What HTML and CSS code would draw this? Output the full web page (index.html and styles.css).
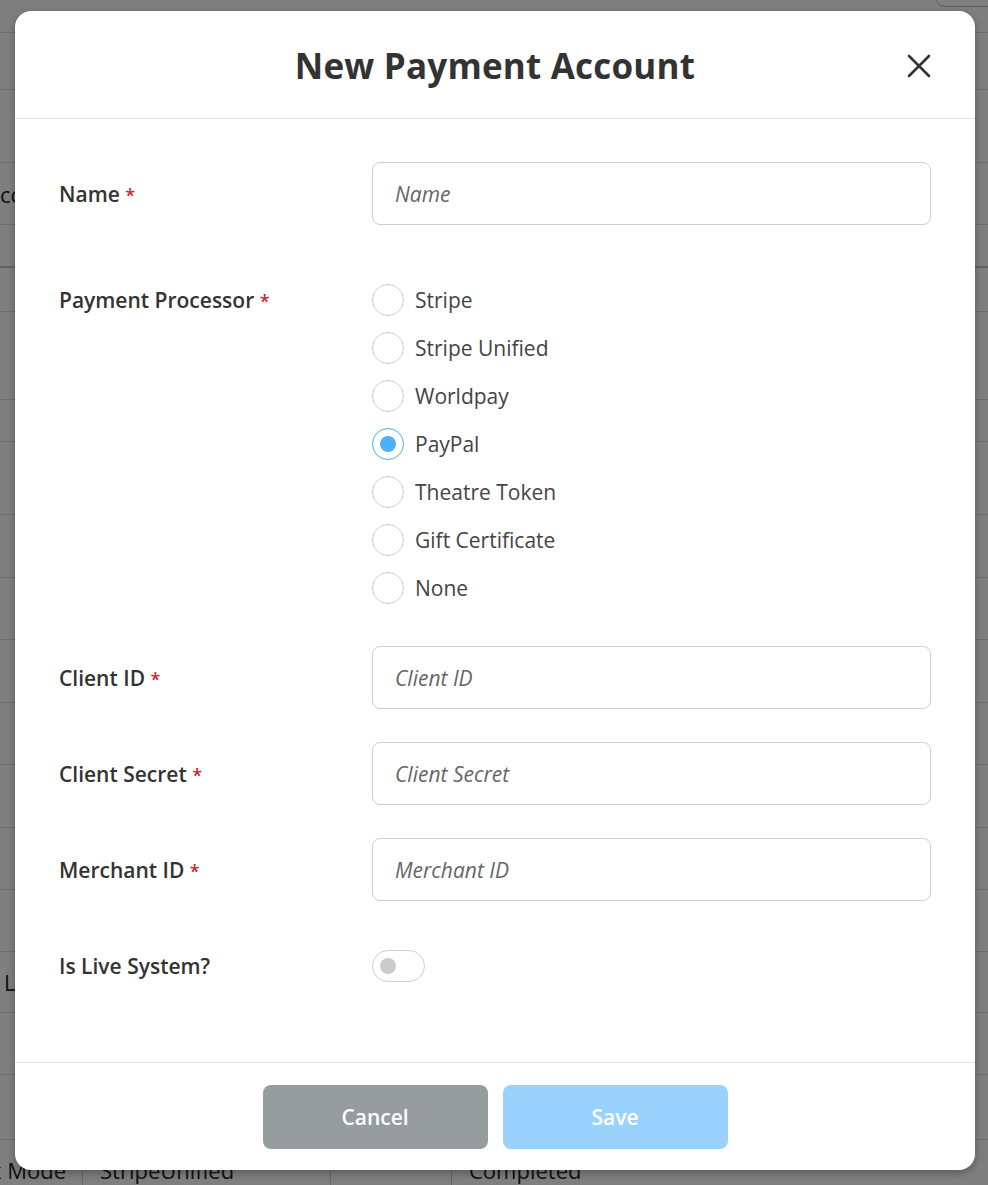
FILE: index.html
```html
<!DOCTYPE html>
<html>
<head>
<meta charset="utf-8">
<link rel="stylesheet" href="styles.css">
</head>
<body>
<div class="page">
  <div class="topbtn"></div>
  <div class="row h33"></div>
  <div class="row h57"></div>
  <div class="row h73"></div>
  <div class="row h62"><span class="cell c-acc">Acco</span></div>
  <div class="row h43 thick"></div>
  <div class="row h44"></div>
  <div class="row h88"></div>
  <div class="row h42"></div>
  <div class="row h73"></div>
  <div class="row h63"></div>
  <div class="row h62"></div>
  <div class="row h63"></div>
  <div class="row h62"></div>
  <div class="row h63"></div>
  <div class="row h62"></div>
  <div class="row h62"></div>
  <div class="row h61"><span class="cell c-live">Live</span></div>
  <div class="row h62"></div>
  <div class="row h65"></div>
  <div class="row last"><span class="cell c1">Sandbox Mode</span><span class="cell c2">StripeUnified</span><span class="cell c3"></span><span class="cell c4">Completed</span></div>
</div>
<div class="overlay"></div>
<div class="modal">
  <div class="modal-header">
    <h1 class="title">New Payment Account</h1>
    <button class="close" aria-label="Close">
      <svg width="24" height="24" viewBox="0 0 24 24"><path d="M2 2 L22 22 M22 2 L2 22" stroke="#333" stroke-width="2.6" stroke-linecap="round"/></svg>
    </button>
  </div>
  <div class="modal-body">
    <div class="field">
      <label class="label">Name <span class="req">*</span></label>
      <div class="control"><input class="input" placeholder="Name"></div>
    </div>
    <div class="field field-radio">
      <label class="label">Payment Processor <span class="req">*</span></label>
      <div class="control radios">
        <div class="radio"><span class="dot"></span>Stripe</div>
        <div class="radio"><span class="dot"></span>Stripe Unified</div>
        <div class="radio"><span class="dot"></span>Worldpay</div>
        <div class="radio checked"><span class="dot"></span>PayPal</div>
        <div class="radio"><span class="dot"></span>Theatre Token</div>
        <div class="radio"><span class="dot"></span>Gift Certificate</div>
        <div class="radio"><span class="dot"></span>None</div>
      </div>
    </div>
    <div class="field">
      <label class="label">Client ID <span class="req">*</span></label>
      <div class="control"><input class="input" placeholder="Client ID"></div>
    </div>
    <div class="field">
      <label class="label">Client Secret <span class="req">*</span></label>
      <div class="control"><input class="input" placeholder="Client Secret"></div>
    </div>
    <div class="field">
      <label class="label">Merchant ID <span class="req">*</span></label>
      <div class="control"><input class="input" placeholder="Merchant ID"></div>
    </div>
    <div class="field field-toggle">
      <label class="label">Is Live System?</label>
      <div class="control"><span class="toggle"><span class="knob"></span></span></div>
    </div>
  </div>
  <div class="modal-footer">
    <button class="btn btn-cancel">Cancel</button>
    <button class="btn btn-save">Save</button>
  </div>
</div>
</body>
</html>
```
FILE: styles.css
```css
* { box-sizing: border-box; }
html, body { margin: 0; padding: 0; }
body {
  width: 988px;
  height: 1185px;
  overflow: hidden;
  position: relative;
  font-family: "Open Sans", "Liberation Sans", sans-serif;
  background: #fff;
}
.page {
  display: flex;
  flex-direction: column;
  color: #222;
  font-size: 22px;
}
.topbtn {
  position: absolute;
  left: 935px;
  top: -30px;
  width: 80px;
  height: 37px;
  border: 1px solid #bbb;
  border-radius: 10px;
}
.row {
  border-bottom: 1px solid #dcdcdc;
  display: flex;
  align-items: center;
  flex: none;
  white-space: nowrap;
}
.thick { border-bottom: 2px solid #c8c8c8; }
.h33 { height: 33px; }
.h42 { height: 42px; }
.h43 { height: 43px; }
.h44 { height: 44px; }
.h57 { height: 57px; }
.h61 { height: 61px; }
.h62 { height: 62px; }
.h63 { height: 63px; }
.h65 { height: 65px; }
.h73 { height: 73px; }
.h88 { height: 88px; }
.cell { white-space: nowrap; }
.c-acc { margin-left: -14px; }
.c-live { margin-left: 4px; }
.last { height: 60px; border-bottom: 0; align-items: stretch; }
.last .cell { line-height: 60px; }
.last .c1 { margin-left: -117px; width: 200px; flex: none; text-align: right; padding-right: 16px; border-right: 1px solid #ccc; }
.last .c2 { width: 248px; flex: none; padding-left: 17px; border-right: 1px solid #ccc; }
.last .c3 { width: 121px; flex: none; border-right: 1px solid #ccc; }
.last .c4 { padding-left: 17px; }
.overlay {
  position: absolute;
  inset: 0;
  background: rgba(0, 0, 0, 0.5);
}
.modal {
  position: absolute;
  left: 15px;
  top: 11px;
  width: 960px;
  height: 1159px;
  background: #fff;
  border-radius: 16px;
  box-shadow: 0 3px 8px rgba(0,0,0,0.3);
  display: flex;
  flex-direction: column;
}
.modal-header {
  height: 108px;
  border-bottom: 1px solid #e5e5e5;
  display: flex;
  align-items: center;
  justify-content: center;
  position: relative;
  flex: none;
}
.title {
  margin: 0;
  font-size: 35px;
  font-weight: 700;
  color: #333;
  line-height: 1;
  padding-top: 2px;
  letter-spacing: 0.2px;
}
.close {
  position: absolute;
  right: 44px;
  top: 43px;
  border: 0;
  background: none;
  padding: 0;
  width: 24px;
  height: 24px;
  display: flex;
}
.modal-body {
  flex: 1;
  padding: 43px 44px 0 44px;
  display: flex;
  flex-direction: column;
}
.field {
  display: flex;
  align-items: center;
  margin-bottom: 33px;
}
.label {
  width: 313px;
  flex: none;
  font-size: 21px;
  font-weight: 600;
  color: #333;
}
.req { color: #d2232a; font-size: 18px; }
.control { flex: 1; }
.input {
  display: block;
  width: 100%;
  height: 63px;
  border: 1px solid #cfcfcf;
  border-radius: 8px;
  padding: 0 22px;
  font-family: inherit;
  font-size: 21px;
  color: #333;
  outline: none;
}
.input::placeholder {
  font-style: italic;
  color: #666;
}
.field-radio {
  align-items: flex-start;
  margin-top: 26px;
  margin-bottom: 42px;
}
.field-radio .label { line-height: 32px; }
.radios { display: flex; flex-direction: column; gap: 16px; }
.radio {
  display: flex;
  align-items: center;
  height: 32px;
  font-size: 21px;
  color: #444;
}
.dot {
  width: 32px;
  height: 32px;
  border: 1px solid #cfcfcf;
  border-radius: 50%;
  margin-right: 11px;
  display: flex;
  align-items: center;
  justify-content: center;
  flex: none;
}
.radio.checked .dot { border-color: #4eb0f5; }
.radio.checked .dot::after {
  content: "";
  width: 16px;
  height: 16px;
  border-radius: 50%;
  background: #4eb0f5;
}
.field-toggle { margin-top: 16px; }
.toggle {
  display: flex;
  align-items: center;
  width: 53px;
  height: 32px;
  border: 1px solid #cfcfcf;
  border-radius: 16px;
  padding-left: 7px;
}
.knob {
  width: 16px;
  height: 16px;
  border-radius: 50%;
  background: #cbcbcb;
}
.modal-footer {
  flex: none;
  height: 108px;
  border-top: 1px solid #e5e5e5;
  display: flex;
  justify-content: center;
  align-items: center;
  gap: 15px;
}
.btn {
  width: 225px;
  height: 64px;
  border: 0;
  border-radius: 8px;
  color: #fff;
  font-family: inherit;
  font-size: 21px;
  font-weight: 600;
}
.btn-cancel { background: #979c9f; }
.btn-save { background: #99d3fd; }
```
